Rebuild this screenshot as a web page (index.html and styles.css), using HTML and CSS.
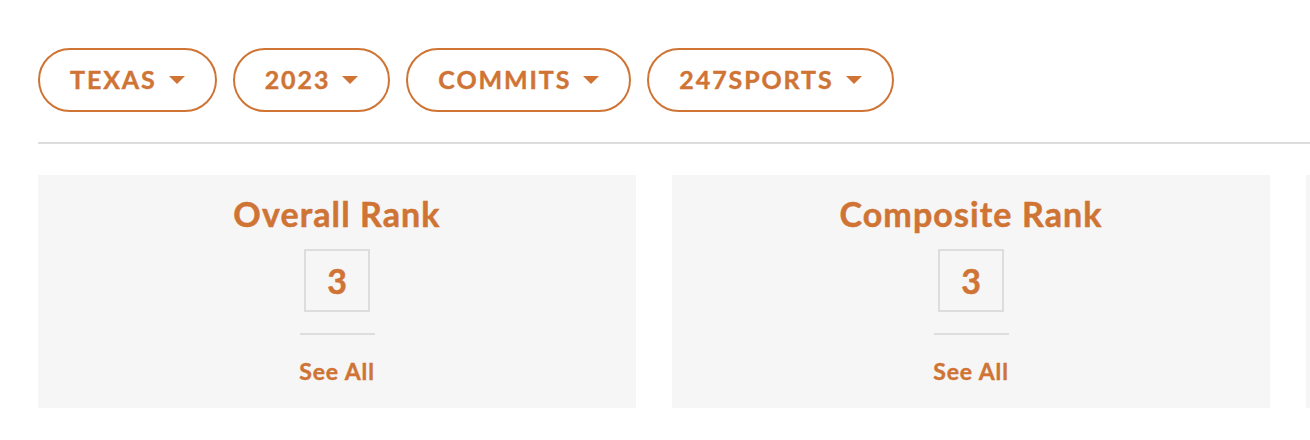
FILE: index.html
```html
<!DOCTYPE html>
<html lang="en">
<head>
<meta charset="utf-8">
<title>Recruiting Rankings</title>
<link rel="stylesheet" href="styles.css">
</head>
<body>
<div class="page">
  <div class="filters">
    <button class="pill"><span>TEXAS</span><i class="caret"></i></button>
    <button class="pill"><span>2023</span><i class="caret"></i></button>
    <button class="pill"><span>COMMITS</span><i class="caret"></i></button>
    <button class="pill"><span>247SPORTS</span><i class="caret"></i></button>
  </div>
  <hr class="rule">
  <div class="cards">
    <div class="card">
      <h2 class="card-title">Overall Rank</h2>
      <div class="rank">3</div>
      <div class="divider"></div>
      <a class="see-all" href="#">See All</a>
    </div>
    <div class="card">
      <h2 class="card-title">Composite Rank</h2>
      <div class="rank">3</div>
      <div class="divider"></div>
      <a class="see-all" href="#">See All</a>
    </div>
    <div class="card card-peek" aria-hidden="true"></div>
  </div>
</div>
</body>
</html>
```

FILE: styles.css
```css
html, body {
  margin: 0;
  padding: 0;
  background: #ffffff;
  overflow: hidden;
}

body {
  font-family: "Lato", "Open Sans", sans-serif;
  color: #cf7434;
}

.page {
  padding-top: 48px;
  padding-left: 38px;
}

.filters {
  display: flex;
  gap: 16px;
}

.pill {
  display: flex;
  align-items: center;
  gap: 12px;
  box-sizing: border-box;
  height: 64px;
  padding: 0 30px 2px;
  border: 2px solid #cf7434;
  border-radius: 32px;
  background: #ffffff;
  color: #cf7434;
  font-family: inherit;
  font-weight: 700;
  font-size: 25px;
  letter-spacing: 1.9px;
  -webkit-text-stroke: 0.4px #cf7434;
  cursor: pointer;
}

.caret {
  display: block;
  width: 0;
  height: 0;
  border-left: 8px solid transparent;
  border-right: 8px solid transparent;
  border-top: 8px solid #cf7434;
  margin-top: 2px;
}

.rule {
  margin: 30px 0 0 0;
  border: 0;
  height: 2px;
  background: #dddddd;
}

.cards {
  display: flex;
  gap: 36px;
  margin-top: 31px;
}

.card {
  flex: 0 0 598px;
  height: 233px;
  box-sizing: border-box;
  background: #f6f6f6;
  display: flex;
  flex-direction: column;
  align-items: center;
  padding: 18px 0 0;
}

.card-title {
  margin: 0;
  font-size: 34px;
  line-height: 41px;
  font-weight: 700;
  letter-spacing: 1.1px;
  -webkit-text-stroke: 0.5px #cf7434;
}

.rank {
  margin-top: 15px;
  box-sizing: border-box;
  width: 66px;
  height: 63px;
  border: 2px solid #dddddd;
  display: flex;
  align-items: center;
  justify-content: center;
  font-size: 34px;
  font-weight: 700;
  -webkit-text-stroke: 0.5px #cf7434;
}

.divider {
  margin-top: 21px;
  width: 75px;
  height: 2px;
  background: #dddddd;
}

.see-all {
  margin-top: 23px;
  font-size: 23px;
  line-height: 27px;
  font-weight: 700;
  color: #cf7434;
  text-decoration: none;
  letter-spacing: 0.9px;
  -webkit-text-stroke: 0.4px #cf7434;
}
```
